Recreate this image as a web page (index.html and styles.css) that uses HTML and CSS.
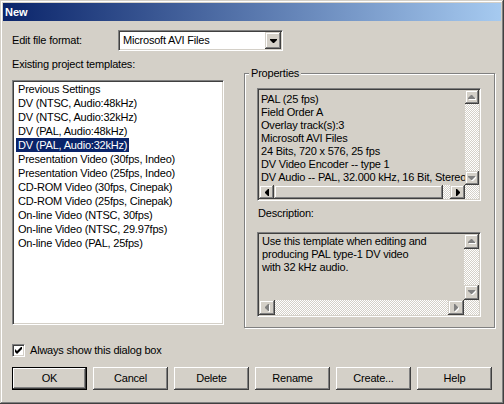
FILE: index.html
```html
<!DOCTYPE html>
<html>
<head>
<meta charset="utf-8">
<title>New</title>
<link rel="stylesheet" href="styles.css">
</head>
<body>
<div class="window">
  <div class="titlebar">New</div>
  <div class="content">
    <div class="row-format">
      <span class="format-label">Edit file format:</span>
      <div class="combo">
        <span class="combo-text">Microsoft AVI Files</span>
        <span class="raised combo-btn"><svg width="7" height="4" viewBox="0 0 7 4"><polygon points="0,0 7,0 7,1 4,4 3,4 0,1" fill="#000"/></svg></span>
      </div>
    </div>

    <div class="main">
      <div class="left">
        <div class="label">Existing project templates:</div>
        <div class="listbox">
          <div class="item">Previous Settings</div>
          <div class="item">DV (NTSC, Audio:48kHz)</div>
          <div class="item">DV (NTSC, Audio:32kHz)</div>
          <div class="item">DV (PAL, Audio:48kHz)</div>
          <div class="item sel">DV (PAL, Audio:32kHz)</div>
          <div class="item">Presentation Video (30fps, Indeo)</div>
          <div class="item">Presentation Video (25fps, Indeo)</div>
          <div class="item">CD-ROM Video (30fps, Cinepak)</div>
          <div class="item">CD-ROM Video (25fps, Cinepak)</div>
          <div class="item">On-line Video (NTSC, 30fps)</div>
          <div class="item">On-line Video (NTSC, 29.97fps)</div>
          <div class="item">On-line Video (PAL, 25fps)</div>
        </div>
      </div>

      <fieldset class="group">
        <legend>Properties</legend>
        <div class="textbox props">
          <div class="text">
            <div>PAL (25 fps)</div>
            <div>Field Order A</div>
            <div>Overlay track(s):3</div>
            <div>Microsoft AVI Files</div>
            <div>24 Bits, 720 x 576, 25 fps</div>
            <div>DV Video Encoder -- type 1</div>
            <div>DV Audio -- PAL, 32.000 kHz, 16 Bit, Stereo</div>
          </div>
          <div class="vscroll">
            <span class="sarrow"><svg width="8" height="5" viewBox="0 0 8 5"><polygon points="4,1 5,1 8,4 8,5 1,5 1,4" fill="#fff"/><polygon points="3,0 4,0 7,3 7,4 0,4 0,3" fill="#808080"/></svg></span>
            <span class="track"></span>
            <span class="sarrow"><svg width="8" height="5" viewBox="0 0 8 5"><polygon points="1,1 8,1 8,2 5,5 4,5 1,2" fill="#fff"/><polygon points="0,0 7,0 7,1 4,4 3,4 0,1" fill="#808080"/></svg></span>
          </div>
          <div class="hscroll">
            <span class="sarrow"><svg width="4" height="7" viewBox="0 0 4 7"><polygon points="0,3 0,4 3,7 4,7 4,0 3,0" fill="#000"/></svg></span>
            <span class="track"><span class="raised thumb"></span></span>
            <span class="sarrow"><svg width="4" height="7" viewBox="0 0 4 7"><polygon points="4,3 4,4 1,7 0,7 0,0 1,0" fill="#000"/></svg></span>
          </div>
          <div class="track"></div>
        </div>

        <div class="desc-label">Description:</div>

        <div class="textbox desc">
          <div class="text">
            <div>Use this template when editing and</div>
            <div>producing PAL type-1 DV video</div>
            <div>with 32 kHz audio.</div>
          </div>
          <div class="vscroll">
            <span class="sarrow"><svg width="8" height="5" viewBox="0 0 8 5"><polygon points="4,1 5,1 8,4 8,5 1,5 1,4" fill="#fff"/><polygon points="3,0 4,0 7,3 7,4 0,4 0,3" fill="#808080"/></svg></span>
            <span class="track"></span>
            <span class="sarrow"><svg width="8" height="5" viewBox="0 0 8 5"><polygon points="1,1 8,1 8,2 5,5 4,5 1,2" fill="#fff"/><polygon points="0,0 7,0 7,1 4,4 3,4 0,1" fill="#808080"/></svg></span>
          </div>
          <div class="hscroll">
            <span class="sarrow"><svg width="5" height="8" viewBox="0 0 5 8"><polygon points="1,4 1,5 4,8 5,8 5,1 4,1" fill="#fff"/><polygon points="0,3 0,4 3,7 4,7 4,0 3,0" fill="#808080"/></svg></span>
            <span class="track"></span>
            <span class="sarrow"><svg width="5" height="8" viewBox="0 0 5 8"><polygon points="5,4 5,5 2,8 1,8 1,1 2,1" fill="#fff"/><polygon points="4,3 4,4 1,7 0,7 0,0 1,0" fill="#808080"/></svg></span>
          </div>
          <div class="track"></div>
        </div>
      </fieldset>
    </div>

    <div class="check-row">
      <span class="checkbox"><svg width="7" height="7" viewBox="0 0 7 7"><polygon points="0,2 2,4 7,-1 7,2 2,7 0,5" fill="#000"/></svg></span>
      <span>Always show this dialog box</span>
    </div>

    <div class="buttons">
      <span class="btn default">OK</span>
      <span class="btn">Cancel</span>
      <span class="btn">Delete</span>
      <span class="btn">Rename</span>
      <span class="btn">Create...</span>
      <span class="btn">Help</span>
    </div>
  </div>
</div>
</body>
</html>
```

FILE: styles.css
```css
* { box-sizing: border-box; }

html, body {
  margin: 0;
  padding: 0;
}

body {
  width: 504px;
  height: 404px;
  overflow: hidden;
  background: #d4d0c8;
  color: #000;
  font-family: "Liberation Sans", Arial, sans-serif;
  font-size: 11px;
  line-height: 13px;
  letter-spacing: -0.2px;
}

.window {
  width: 504px;
  height: 404px;
  padding: 3px;
  background: #d4d0c8;
  box-shadow: inset -1px -1px #404040, inset 1px 1px #d4d0c8,
              inset -2px -2px #808080, inset 2px 2px #fff;
}

.titlebar {
  height: 18px;
  line-height: 18px;
  padding-left: 2px;
  background: linear-gradient(to right, #0a246a, #a6caf0);
  color: #fff;
  font-weight: bold;
  letter-spacing: 0;
}

.content {
  padding: 9px 0 0 9px;
}

/* ---------- file format row ---------- */
.row-format {
  display: flex;
  align-items: center;
  height: 21px;
}

.format-label {
  width: 106px;
}

.combo {
  width: 165px;
  height: 21px;
  display: flex;
  align-items: center;
  background: #fff;
  border: 1px solid;
  border-color: #808080 #fff #fff #808080;
  padding: 1px;
  box-shadow: inset 1px 1px #404040, inset -1px -1px #d4d0c8;
}

.combo-text {
  flex: 1;
  padding-left: 3px;
  white-space: nowrap;
}

.raised {
  background: #d4d0c8;
  box-shadow: inset -1px -1px #404040, inset 1px 1px #d4d0c8,
              inset -2px -2px #808080, inset 2px 2px #fff;
}

.combo-btn {
  width: 16px;
  height: 17px;
  display: flex;
  align-items: center;
  justify-content: center;
}

.combo-btn svg { margin-top: 1px; }

/* ---------- main area ---------- */
.main {
  display: flex;
  align-items: flex-start;
  gap: 20px;
  margin-top: 7px;
}

.left {
  width: 212px;
}

.listbox {
  margin-top: 9px;
  height: 245px;
  background: #fff;
  border: 1px solid;
  border-color: #808080 #fff #fff #808080;
  padding: 0 1px 1px 3px;
  box-shadow: inset 1px 1px #404040, inset -1px -1px #d4d0c8;
}

.item {
  width: fit-content;
  padding: 0 2px;
  line-height: 14px;
  white-space: nowrap;
}

.item:first-child { margin-top: 1px; }

.item.sel {
  background: #0a246a;
  color: #fff;
}

/* ---------- properties group ---------- */
.group {
  width: 251px;
  min-width: 0;
  margin: 8px 0 0 0;
  padding: 8px 12px 10px 12px;
  border: 1px solid #808080;
  box-shadow: inset 1px 1px #fff, 1px 1px #fff;
}

.group legend {
  margin-left: -8px;
  padding: 0 2px;
  line-height: 14px;
  background: #d4d0c8;
}

.textbox {
  width: 224px;
  display: grid;
  background: #d4d0c8;
  border: 1px solid;
  border-color: #808080 #fff #fff #808080;
  padding: 1px;
  box-shadow: inset 1px 1px #404040, inset -1px -1px #d4d0c8;
}

.props {
  height: 113px;
  grid-template-columns: 1fr 14px;
  grid-template-rows: 1fr 14px;
}

.desc {
  height: 85px;
  margin-top: 12px;
  grid-template-columns: 1fr 15px;
  grid-template-rows: 1fr 15px;
}

.text {
  min-width: 0;
  overflow: hidden;
  white-space: nowrap;
  padding: 3px 0 0 2px;
}

.desc .text {
  padding: 1px 0 0 3px;
}

.desc-label {
  margin-top: 6px;
  padding-left: 1px;
}

.track {
  background: repeating-conic-gradient(#fff 0 25%, #d4d0c8 0 50%) 0 0 / 2px 2px;
}

.vscroll {
  display: flex;
  flex-direction: column;
}

.vscroll .track { flex: 1; }

.hscroll {
  display: flex;
  min-width: 0;
}

.hscroll .track {
  flex: 1;
  display: flex;
}

.sarrow {
  display: flex;
  align-items: center;
  justify-content: center;
  flex: none;
  background: #d4d0c8;
  box-shadow: inset -1px -1px #404040, inset 1px 1px #d4d0c8,
              inset -2px -2px #808080, inset 2px 2px #fff;
}

.props .vscroll .sarrow { height: 14px; }
.props .hscroll .sarrow { width: 15px; }
.desc .vscroll .sarrow { height: 15px; }
.desc .hscroll .sarrow { width: 16px; }

.thumb {
  width: 169px;
  height: 100%;
}

/* ---------- checkbox ---------- */
.check-row {
  display: flex;
  align-items: center;
  gap: 5px;
  height: 13px;
  margin-top: 16px;
}

.checkbox {
  width: 13px;
  height: 13px;
  display: flex;
  align-items: center;
  justify-content: center;
  background: #fff;
  border: 1px solid;
  border-color: #808080 #fff #fff #808080;
  box-shadow: inset 1px 1px #404040, inset -1px -1px #d4d0c8;
}

/* ---------- buttons ---------- */
.buttons {
  display: flex;
  gap: 6px;
  margin-top: 10px;
}

.btn {
  width: 75px;
  height: 23px;
  display: flex;
  align-items: center;
  justify-content: center;
  background: #d4d0c8;
  box-shadow: inset -1px -1px #404040, inset 1px 1px #fff,
              inset -2px -2px #808080, inset 2px 2px #d4d0c8;
}

.btn.default {
  border: 1px solid #000;
}
```
